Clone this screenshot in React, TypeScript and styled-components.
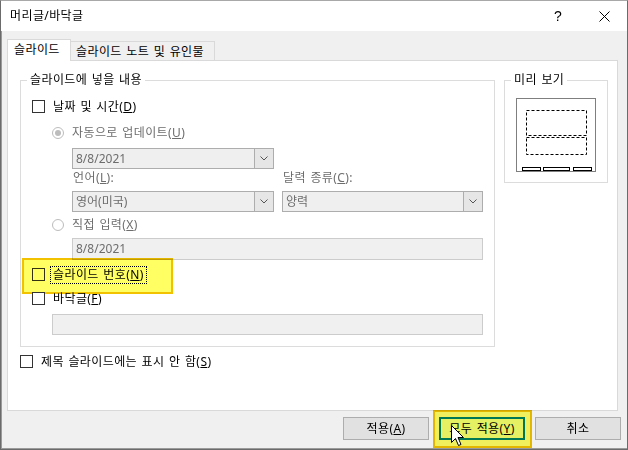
import React from "react";
import styled, { createGlobalStyle } from "styled-components";

const GlobalStyle = createGlobalStyle`
  html, body {
    margin: 0;
    padding: 0;
    background: #ffffff;
  }
  body {
    font-family: "Noto Sans", "Noto Sans CJK KR", sans-serif;
    font-size: 12px;
    color: #000000;
    word-spacing: 1px;
    letter-spacing: 0.4px;
  }
  * {
    box-sizing: border-box;
  }
`;

const Window = styled.div`
  width: 628px;
  height: 450px;
  display: flex;
  flex-direction: column;
  background: #f0f0f0;
  border: 1px solid #6b6b6b;
  border-top-color: #a8a8a8;
  box-shadow: inset 1px -1px 0 #9a9a9a;
`;

const TitleBar = styled.div`
  height: 30px;
  display: flex;
  align-items: center;
  background: #ffffff;
  padding-left: 9px;
  flex: none;
`;

const TitleText = styled.span`
  flex: 1;
  font-size: 12px;
  line-height: 16px;
`;

const CaptionButton = styled.div`
  width: 46px;
  height: 30px;
  display: flex;
  align-items: center;
  justify-content: center;
  font-family: "Liberation Sans", "DejaVu Sans", sans-serif;
  font-size: 14px;
  color: #000000;
`;

const Body = styled.div`
  flex: 1;
  display: flex;
  flex-direction: column;
  padding: 8px 0 0 6px;
`;

const TabStrip = styled.div`
  height: 22px;
  display: flex;
  align-items: flex-end;
`;

const Tab = styled.div<{ $active?: boolean; $width: number }>`
  position: relative;
  z-index: ${(p) => (p.$active ? 2 : 1)};
  width: ${(p) => p.$width}px;
  height: ${(p) => (p.$active ? 22 : 19)}px;
  margin-bottom: ${(p) => (p.$active ? 0 : 1)}px;
  margin-left: ${(p) => (p.$active ? 0 : -1)}px;
  padding: ${(p) => (p.$active ? "2px 0 0 6px" : "2px 0 0 5px")};
  border: 1px solid #d9d9d9;
  border-bottom: none;
  background: ${(p) => (p.$active ? "#ffffff" : "#f0f0f0")};
  line-height: 16px;
  white-space: nowrap;
`;

const Panel = styled.div`
  width: 611px;
  height: 351px;
  margin-top: -1px;
  background: #ffffff;
  border: 1px solid #d9d9d9;
  padding: 11px 8px 0 12px;
  display: flex;
  flex-direction: column;
`;

const GroupsRow = styled.div`
  display: flex;
  align-items: flex-start;
  gap: 9px;
`;

const GroupBox = styled.fieldset<{ $width: number }>`
  width: ${(p) => p.$width}px;
  min-width: 0;
  margin: 0;
  padding: 0;
  border: 1px solid #dcdcdc;
`;

const Legend = styled.legend`
  margin-left: 6px;
  padding: 0 3px;
  font-size: 12px;
  line-height: 16px;
  white-space: nowrap;
`;

const GroupBody = styled.div`
  display: flex;
  flex-direction: column;
  padding: 10px 11px 11px 11px;
`;

const PreviewBody = styled.div`
  padding: 10px 11px;
  svg {
    display: block;
  }
`;

const OptionRow = styled.div<{ $indent?: number; $mt?: number }>`
  position: relative;
  height: 17px;
  display: flex;
  align-items: center;
  gap: 8px;
  margin-left: ${(p) => p.$indent ?? 0}px;
  margin-top: ${(p) => p.$mt ?? 0}px;
`;

const HighlightRow = styled(OptionRow)`
  gap: 5px;
  &::after {
    content: "";
    position: absolute;
    left: -10px;
    top: -8px;
    width: 147px;
    height: 32px;
    background: #ffff64;
    border: 2px solid #f2c200;
    mix-blend-mode: multiply;
    pointer-events: none;
  }
`;

const Checkbox = styled.span`
  display: inline-block;
  flex: none;
  width: 13px;
  height: 13px;
  border: 1px solid #333333;
  background: #ffffff;
`;

const Radio = styled.span<{ $checked?: boolean }>`
  flex: none;
  width: 12px;
  height: 12px;
  border-radius: 50%;
  border: 1px solid #bcbcbc;
  background: #ffffff;
  display: flex;
  align-items: center;
  justify-content: center;
  &::after {
    content: "";
    display: ${(p) => (p.$checked ? "block" : "none")};
    width: 6px;
    height: 6px;
    border-radius: 50%;
    background: #bcbcbc;
  }
`;

const Label = styled.span<{ $disabled?: boolean }>`
  line-height: 16px;
  white-space: nowrap;
  color: ${(p) => (p.$disabled ? "#6d6d6d" : "#000000")};
`;

const FocusLabel = styled.span`
  line-height: 16px;
  white-space: nowrap;
  padding: 0 2px;
  border: 1px dotted #000000;
`;

const FieldGrid = styled.div<{ $mt: number; $height: number }>`
  display: grid;
  grid-template-columns: 202px 201px;
  column-gap: 8px;
  margin-left: 40px;
  margin-top: ${(p) => p.$mt}px;
  height: ${(p) => p.$height}px;
`;

const FieldLabel = styled.span`
  padding-left: 1px;
  line-height: 16px;
  color: #6d6d6d;
  white-space: nowrap;
`;

const ComboBox = styled.div<{ $width?: number }>`
  width: ${(p) => (p.$width ? `${p.$width}px` : "auto")};
  height: 21px;
  display: flex;
  border: 1px solid #adadad;
  background: #efefef;
`;

const ComboText = styled.span`
  flex: 1;
  padding-left: 3px;
  line-height: 19px;
  color: #6d6d6d;
  white-space: nowrap;
  letter-spacing: 0;
`;

const ComboArrow = styled.span`
  width: 19px;
  display: flex;
  align-items: center;
  justify-content: center;
  border-left: 1px solid #adadad;
  background: #e6e6e6;
`;

const TextField = styled.div<{ $indent: number; $width: number; $height: number; $mt: number }>`
  margin-left: ${(p) => p.$indent}px;
  margin-top: ${(p) => p.$mt}px;
  width: ${(p) => p.$width}px;
  height: ${(p) => p.$height}px;
  border: 1px solid #cccccc;
  background: #f0f0f0;
  padding-left: 3px;
  line-height: ${(p) => p.$height - 2}px;
  color: #6d6d6d;
  letter-spacing: 0;
`;

const ButtonRow = styled.div`
  display: flex;
  justify-content: flex-end;
  align-items: flex-start;
  padding-right: 6px;
`;

const Button = styled.div<{ $focused?: boolean }>`
  width: 86px;
  height: 23px;
  margin-top: ${(p) => (p.$focused ? 0 : 6)}px;
  display: flex;
  align-items: center;
  justify-content: center;
  background: ${(p) => (p.$focused ? "#e5f1fb" : "#e1e1e1")};
  border: ${(p) => (p.$focused ? "2px solid #0078d7" : "1px solid #adadad")};
  line-height: 16px;
  white-space: nowrap;
`;

const ButtonHighlight = styled.div`
  position: relative;
  margin: -1px 3px 0 4px;
  padding: 7px 7px 8px 6px;
  &::after {
    content: "";
    position: absolute;
    inset: 0;
    background: #ffff64;
    border: 2px solid #f2c200;
    mix-blend-mode: multiply;
    pointer-events: none;
  }
`;

const Cursor = styled.svg`
  position: absolute;
  left: 18px;
  top: 15px;
  z-index: 3;
`;

const Chevron = () => (
  <svg width="8" height="5" viewBox="0 0 8 5">
    <polyline points="0.5,0.5 4,4 7.5,0.5" fill="none" stroke="#555555" strokeWidth="1" />
  </svg>
);

const Combo: React.FC<{ value: string; width?: number }> = ({ value, width }) => (
  <ComboBox $width={width}>
    <ComboText>{value}</ComboText>
    <ComboArrow>
      <Chevron />
    </ComboArrow>
  </ComboBox>
);

const PreviewDrawing = () => (
  <svg width="80" height="74" viewBox="0 0 80 74">
    <rect x="0.5" y="0.5" width="79" height="73" fill="#ffffff" stroke="#7f7f7f" />
    <rect x="10.5" y="12.5" width="60" height="25" fill="none" stroke="#000000" strokeDasharray="3 2" />
    <rect x="10.5" y="39.5" width="60" height="17" fill="none" stroke="#000000" strokeDasharray="3 2" />
    <rect x="6.5" y="69.5" width="18" height="3" fill="#ffffff" stroke="#000000" />
    <rect x="27.5" y="69.5" width="26" height="3" fill="#ffffff" stroke="#000000" />
    <rect x="57.5" y="69.5" width="18" height="3" fill="#ffffff" stroke="#000000" />
  </svg>
);

export default function App() {
  return (
    <>
      <GlobalStyle />
      <Window>
        <TitleBar>
          <TitleText>머리글/바닥글</TitleText>
          <CaptionButton>?</CaptionButton>
          <CaptionButton>
            <svg width="11" height="11" viewBox="0 0 11 11">
              <path d="M0.5 0.5 L10.5 10.5 M10.5 0.5 L0.5 10.5" stroke="#000000" strokeWidth="1" />
            </svg>
          </CaptionButton>
        </TitleBar>
        <Body>
          <TabStrip>
            <Tab $active $width={64}>슬라이드</Tab>
            <Tab $width={145}>슬라이드 노트 및 유인물</Tab>
          </TabStrip>
          <Panel>
            <GroupsRow>
              <GroupBox $width={475}>
                <Legend>슬라이드에 넣을 내용</Legend>
                <GroupBody>
                  <OptionRow>
                    <Checkbox />
                    <Label>
                      날짜 및 시간(<u>D</u>)
                    </Label>
                  </OptionRow>
                  <OptionRow $indent={20} $mt={9}>
                    <Radio $checked />
                    <Label $disabled>
                      자동으로 업데이트(<u>U</u>)
                    </Label>
                  </OptionRow>
                  <FieldGrid $mt={7} $height={21}>
                    <Combo value="8/8/2021" />
                  </FieldGrid>
                  <FieldGrid $mt={1} $height={16}>
                    <FieldLabel>
                      언어(<u>L</u>):
                    </FieldLabel>
                    <FieldLabel>
                      달력 종류(<u>C</u>):
                    </FieldLabel>
                  </FieldGrid>
                  <FieldGrid $mt={5} $height={21}>
                    <Combo value="영어(미국)" />
                    <Combo value="양력" />
                  </FieldGrid>
                  <OptionRow $indent={20} $mt={4}>
                    <Radio />
                    <Label $disabled>
                      직접 입력(<u>X</u>)
                    </Label>
                  </OptionRow>
                  <TextField $indent={40} $width={411} $height={22} $mt={5}>
                    8/8/2021
                  </TextField>
                  <HighlightRow $mt={6}>
                    <Checkbox />
                    <FocusLabel>
                      슬라이드 번호(<u>N</u>)
                    </FocusLabel>
                  </HighlightRow>
                  <OptionRow $mt={7}>
                    <Checkbox />
                    <Label>
                      바닥글(<u>F</u>)
                    </Label>
                  </OptionRow>
                  <TextField $indent={20} $width={431} $height={21} $mt={7} />
                </GroupBody>
              </GroupBox>
              <GroupBox $width={104}>
                <Legend>미리 보기</Legend>
                <PreviewBody>
                  <PreviewDrawing />
                </PreviewBody>
              </GroupBox>
            </GroupsRow>
            <OptionRow $mt={6}>
              <Checkbox />
              <Label>
                제목 슬라이드에는 표시 안 함(<u>S</u>)
              </Label>
            </OptionRow>
          </Panel>
          <ButtonRow>
            <Button>
              적용(<u>A</u>)
            </Button>
            <ButtonHighlight>
              <Button $focused>
                모두 적용(<u>Y</u>)
              </Button>
              <Cursor width="13" height="21" viewBox="0 0 13 21">
                <path
                  d="M0.5 0.5 V17.5 L4.5 13.5 L7.5 20.5 L10 19.5 L7 12.5 H12.5 Z"
                  fill="#ffffff"
                  stroke="#000000"
                  strokeWidth="1"
                  strokeLinejoin="miter"
                />
              </Cursor>
            </ButtonHighlight>
            <Button>취소</Button>
          </ButtonRow>
        </Body>
      </Window>
    </>
  );
}
